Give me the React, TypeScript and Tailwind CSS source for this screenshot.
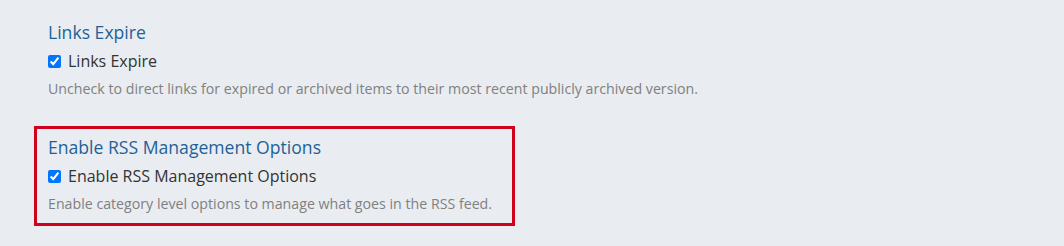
export default function App() {
  return (
    <div className="min-h-[246px] w-full bg-[#e9edf2] pl-[34px] pt-[11px] font-['Open_Sans',sans-serif]">
      <Section
        title="Links Expire"
        label="Links Expire"
        help="Uncheck to direct links for expired or archived items to their most recent publicly archived version."
        className="w-[700px] border-transparent"
      />
      <Section
        title="Enable RSS Management Options"
        label="Enable RSS Management Options"
        help="Enable category level options to manage what goes in the RSS feed."
        className="mt-[15px] w-[481px] border-[#d0021b]"
      />
    </div>
  )
}

function Section({
  title,
  label,
  help,
  className,
}: {
  title: string
  label: string
  help: string
  className: string
}) {
  return (
    <div className={`border-[3px] px-[11px] pb-[9px] pt-[6px] ${className}`}>
      <h3 className="text-[17.6px] leading-[24px] text-[#1f6197]">{title}</h3>
      <label className="mt-[6px] flex items-center gap-[7px] text-[16px] leading-[22px] text-[#333]">
        <input type="checkbox" defaultChecked className="m-0 h-[13px] w-[13px] accent-[#0075ff]" />
        <span>{label}</span>
      </label>
      <p className="mt-[7px] text-[14.2px] leading-[20px] text-[#808080]">{help}</p>
    </div>
  )
}
